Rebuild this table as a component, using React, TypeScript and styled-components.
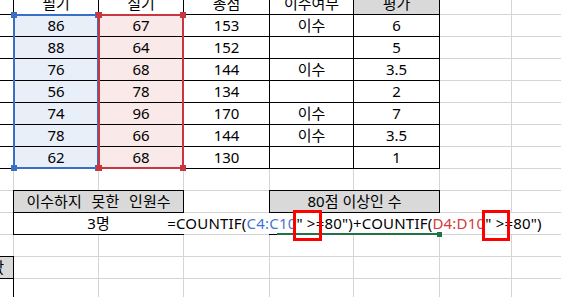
import React from 'react';
import styled, { createGlobalStyle } from 'styled-components';

const GlobalStyle = createGlobalStyle`
  html, body {
    margin: 0;
    padding: 0;
    background: #fff;
    overflow: hidden;
  }
`;

type Tone = 'plain' | 'head' | 'blue' | 'red';

const toneBg: Record<Tone, string> = {
  plain: '#ffffff',
  head: '#d9d9d9',
  blue: '#e9eff9',
  red: '#f9e9e9',
};

const Viewport = styled.div`
  width: 561px;
  height: 297px;
  overflow: hidden;
  background: #fff;
`;

const Sheet = styled.div`
  display: grid;
  grid-template-columns: 84px 84px 84px 85px 83px 85px 71px 84px;
  grid-template-rows: repeat(14, 21px);
  gap: 1px;
  width: max-content;
  margin: -7px 0 0 -71px;
  background: #d4d4d4;
  font-family: "Noto Sans", "Noto Sans CJK KR", sans-serif;
  font-size: 15px;
  color: #000;
`;

const Cell = styled.div<{ $row: number; $col: number; $span?: number; $tone?: Tone; $boxed?: boolean; $right?: boolean; $wide?: boolean }>`
  grid-row: ${(p) => p.$row};
  grid-column: ${(p) => p.$col} / span ${(p) => p.$span ?? 1};
  display: flex;
  align-items: center;
  justify-content: ${(p) => (p.$right ? 'flex-end' : 'center')};
  padding-right: ${(p) => (p.$right ? '9px' : '0')};
  background: ${(p) => toneBg[p.$tone ?? 'plain']};
  box-shadow: ${(p) => (p.$boxed ? '0 0 0 1px #000' : 'none')};
  word-spacing: ${(p) => (p.$wide ? '6px' : 'normal')};
  white-space: nowrap;
  overflow: hidden;
  line-height: 1;
`;

const EditCell = styled(Cell)`
  position: relative;
  z-index: 3;
  overflow: visible;

  &::after {
    content: '';
    position: absolute;
    left: 7px;
    right: 2px;
    bottom: -1px;
    height: 2px;
    background: #217346;
  }

  &::before {
    content: '';
    position: absolute;
    right: -3px;
    bottom: -3px;
    width: 5px;
    height: 5px;
    background: #217346;
    z-index: 1;
  }
`;

const EditText = styled.span`
  display: flex;
  align-items: center;
  height: 100%;
  padding: 0 2px;
  background: #fff;
  letter-spacing: 0.2px;
`;

const Ref = styled.span<{ $color: string }>`
  color: ${(p) => p.$color};
`;

const Mark = styled.span`
  position: relative;

  &::after {
    content: '';
    position: absolute;
    left: -3px;
    right: -6px;
    top: -6px;
    bottom: -10px;
    border: 3px solid #ff0000;
    z-index: 2;
  }
`;

const RangeBox = styled.div<{ $col: number; $color: string }>`
  grid-column: ${(p) => p.$col};
  grid-row: 2 / 9;
  margin: -1px;
  border: 2px solid ${(p) => p.$color};
  position: relative;
  z-index: 1;
  pointer-events: none;
`;

const Handle = styled.span<{ $color: string; $x: 'left' | 'right'; $y: 'top' | 'bottom' }>`
  position: absolute;
  width: 6px;
  height: 6px;
  background: ${(p) => p.$color};
  ${(p) => p.$x}: -4px;
  ${(p) => p.$y}: -4px;
`;

const BLUE = '#3a6fc6';
const RED = '#c8363f';

const headers = ['', '필기', '실기', '총점', '이수여부', '평가'];

const scores: (string | number)[][] = [
  [86, 67, 153, '이수', 6],
  [88, 64, 152, '', 5],
  [76, 68, 144, '이수', 3.5],
  [56, 78, 134, '', 2],
  [74, 96, 170, '이수', 7],
  [78, 66, 144, '이수', 3.5],
  [62, 68, 130, '', 1],
];

const Corners = ({ color }: { color: string }) => (
  <>
    <Handle $color={color} $x="left" $y="top" />
    <Handle $color={color} $x="right" $y="top" />
    <Handle $color={color} $x="left" $y="bottom" />
    <Handle $color={color} $x="right" $y="bottom" />
  </>
);

const emptyRow = (row: number, cols: number[]) =>
  cols.map((col) => <Cell key={`${row}-${col}`} $row={row} $col={col} />);

export default function App() {
  return (
    <Viewport>
      <GlobalStyle />
      <Sheet>
        {headers.map((h, i) => (
          <Cell key={`h${i}`} $row={1} $col={i + 1} $boxed $tone={i === 5 ? 'head' : 'plain'}>
            {h}
          </Cell>
        ))}
        {emptyRow(1, [7, 8])}

        {scores.map((s, r) => (
          <React.Fragment key={`r${r}`}>
            <Cell $row={r + 2} $col={1} $boxed />
            {s.map((v, i) => (
              <Cell
                key={i}
                $row={r + 2}
                $col={i + 2}
                $boxed
                $tone={i === 0 ? 'blue' : i === 1 ? 'red' : 'plain'}
              >
                {v}
              </Cell>
            ))}
            {emptyRow(r + 2, [7, 8])}
          </React.Fragment>
        ))}

        {emptyRow(9, [1, 2, 3, 4, 5, 6, 7, 8])}

        <Cell $row={10} $col={1} />
        <Cell $row={10} $col={2} $span={2} $tone="head" $boxed $wide>이수하지 못한 인원수</Cell>
        <Cell $row={10} $col={4} />
        <Cell $row={10} $col={5} $span={2} $tone="head" $boxed>80점 이상인 수</Cell>
        {emptyRow(10, [7, 8])}

        <Cell $row={11} $col={1} />
        <Cell $row={11} $col={2} $span={2} $boxed>3명</Cell>
        <Cell $row={11} $col={4} />
        {emptyRow(11, [7, 8])}
        <EditCell $row={11} $col={5} $span={2} $boxed>
          <EditText>
            =COUNTIF(<Ref $color="#3f78d4">C4:C10</Ref>
            <Mark>" &gt; </Mark>=80")+COUNTIF(<Ref $color="#d33c3c">D4:D10</Ref>
            <Mark>" &gt; </Mark>=80")
          </EditText>
        </EditCell>

        {emptyRow(12, [1, 2, 3, 4, 5, 6, 7, 8])}

        <Cell $row={13} $col={1} $tone="head" $boxed $right>최대값</Cell>
        {emptyRow(13, [2, 3, 4, 5, 6, 7, 8])}

        <Cell $row={14} $col={1} $boxed />
        {emptyRow(14, [2, 3, 4, 5, 6, 7, 8])}

        <RangeBox $col={2} $color={BLUE}>
          <Corners color={BLUE} />
        </RangeBox>
        <RangeBox $col={3} $color={RED}>
          <Corners color={RED} />
        </RangeBox>
      </Sheet>
    </Viewport>
  );
}
